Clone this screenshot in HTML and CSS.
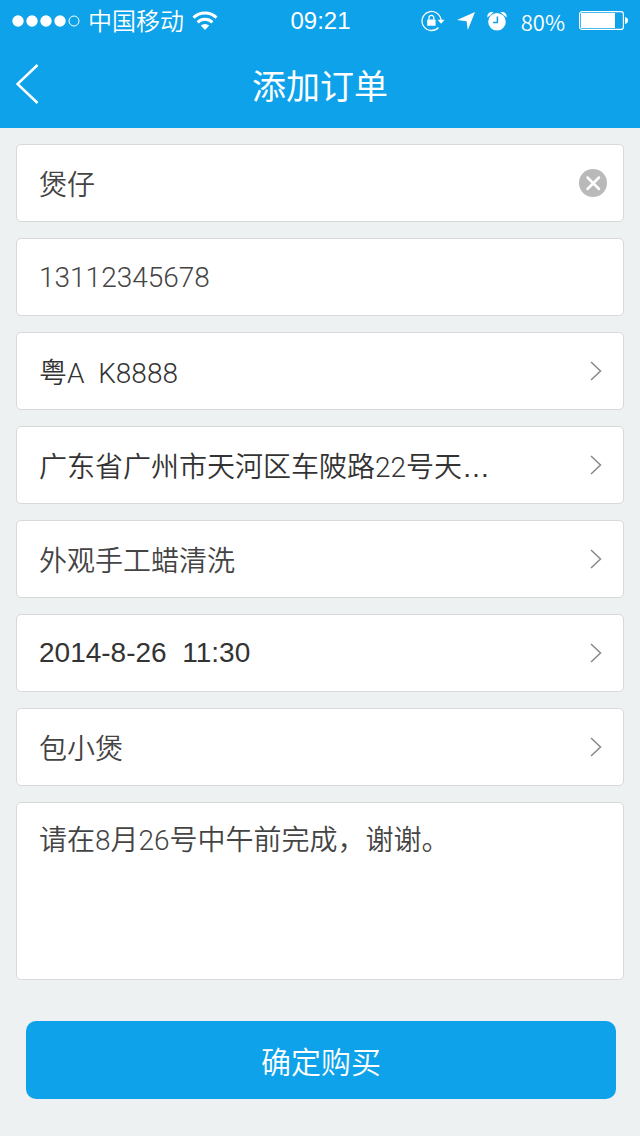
FILE: index.html
```html
<!DOCTYPE html>
<html lang="zh-CN">

<head>
    <meta charset="UTF-8">
    <meta name="viewport" content="width=device-width, initial-scale=1.0">
    <title>添加订单</title>

    <link rel="stylesheet" href="styles.css">
</head>

<body>

    <header>
        <div class="status">
            <div class="status-left">
                <svg class="signal" width="68" height="12" viewBox="0 0 68 12">
                    <g fill="#fff">
                        <circle cx="6" cy="6" r="5.7" />
                        <circle cx="20" cy="6" r="5.7" />
                        <circle cx="34" cy="6" r="5.7" />
                        <circle cx="48" cy="6" r="5.7" />
                    </g>
                    <circle cx="62" cy="6" r="5" fill="none" stroke="#fff" />
                </svg>
                <span class="carrier">中国移动</span>
                <svg width="26" height="20" viewBox="0 0 26 20" fill="none" stroke="#fff" stroke-width="3">
                    <path d="M1.500 6.700a16.500 16.500 0 0 1 23 0" />
                    <path d="M5.600 11.300a10.800 10.800 0 0 1 14.800 0" />
                    <path d="M13 18.900l-4.200-4.300a6 6 0 0 1 8.400 0z" fill="#fff" stroke="none" />
                </svg>
            </div>

            <time class="clock">09:21</time>

            <div class="status-right">
                <!-- rotation lock -->
                <svg width="24" height="22" viewBox="0 0 24 22">
                    <path d="M17.5 17.5a9.500 9.500 0 1 1 2.500-7.500" fill="none" stroke="#fff" stroke-width="1.3" />
                    <path d="M16.600 9.700h7l-3.500 4z" fill="#fff" />
                    <rect x="6.200" y="9.500" width="8.400" height="6.200" rx="0.500" fill="#fff" />
                    <path d="M8 9.700v-2a2.400 2.400 0 0 1 4.800 0v2" fill="none" stroke="#fff" stroke-width="1.3" />
                </svg>
                <!-- location -->
                <svg width="18" height="18" viewBox="0 0 18 18" fill="#fff">
                    <path d="M18 0L0 8l9.600 1.200L10.800 18z" />
                </svg>
                <!-- alarm -->
                <svg width="20" height="20" viewBox="0 0 20 20">
                    <path d="M0.500 6.500C-0.500 2.500 3 0 6.500 1.300zM19.500 6.500C20.500 2.500 17 0 13.500 1.300z" fill="#fff" />
                    <circle cx="10" cy="10.800" r="8.800" fill="#fff" />
                    <path d="M10.400 5.500v6H6" fill="none" stroke="#0da2e9" stroke-width="1.5" />
                </svg>
                <span class="percent">80%</span>
                <!-- battery -->
                <svg class="battery" width="50" height="20" viewBox="0 0 50 20">
                    <rect x="0.600" y="0.600" width="43.800" height="17.800" rx="2.500" fill="none" stroke="#fff" stroke-width="1.2" />
                    <rect x="2" y="2" width="34" height="15" fill="#fff" />
                    <path d="M46 6c4 0.500 4 6.500 0 7z" fill="#fff" />
                </svg>
            </div>
        </div>

        <nav class="navbar">
            <a class="back" href="#" aria-label="返回">
                <svg width="24" height="42" viewBox="0 0 24 42" fill="none" stroke="#fff" stroke-width="2.5">
                    <path d="M21.500 2L1.500 21l20 19" />
                </svg>
            </a>
            <h1>添加订单</h1>
        </nav>
    </header>

    <form class="order">
        <div class="field">
            <input type="text" name="name" aria-label="姓名" value="煲仔">
            <button class="clear" type="button" aria-label="清除">
                <svg width="28" height="28" viewBox="0 0 28 28">
                    <circle cx="14" cy="14" r="14" fill="#b9b9b9" />
                    <path d="M8.500 8.500l11.500 11.500M20 8.500L8.500 20" stroke="#fff" stroke-width="2.5" stroke-linecap="round" />
                </svg>
            </button>
        </div>

        <div class="field">
            <input type="tel" name="phone" aria-label="手机号" value="13112345678">
        </div>

        <button class="field picker dark" type="button">
            <span>粤A&nbsp; K8888</span>
            <svg class="arrow" width="12" height="20" viewBox="0 0 12 20"><path d="M1 1l9.500 9L1 19" /></svg>
        </button>

        <button class="field picker dark" type="button">
            <span>广东省广州市天河区车陂路22号天<span class="dots">…</span></span>
            <svg class="arrow" width="12" height="20" viewBox="0 0 12 20"><path d="M1 1l9.500 9L1 19" /></svg>
        </button>

        <button class="field picker" type="button">
            <span>外观手工蜡清洗</span>
            <svg class="arrow" width="12" height="20" viewBox="0 0 12 20"><path d="M1 1l9.500 9L1 19" /></svg>
        </button>

        <button class="field picker date" type="button">
            <span>2014-8-26&nbsp; 11:30</span>
            <svg class="arrow" width="12" height="20" viewBox="0 0 12 20"><path d="M1 1l9.500 9L1 19" /></svg>
        </button>

        <button class="field picker" type="button">
            <span>包小煲</span>
            <svg class="arrow" width="12" height="20" viewBox="0 0 12 20"><path d="M1 1l9.500 9L1 19" /></svg>
        </button>

        <textarea class="note" name="note" aria-label="备注">请在8月26号中午前完成，谢谢。</textarea>

        <button class="submit" type="submit">确定购买</button>
    </form>

</body>

</html>
```
FILE: styles.css
```css
* {
    box-sizing: border-box;
}

body {
    margin: 0;
    background-color: #edf1f2;
    color: #444;
    font-family: Roboto, "Noto Sans CJK SC", sans-serif;
    font-size: 28px;
    font-weight: 350;
}

input,
textarea,
button {
    margin: 0;
    padding: 0;
    border: none;
    background: none;
    color: inherit;
    font: inherit;
}

svg {
    display: block;
    flex: none;
}

header {
    background-color: #0da2e9;
    color: #fff;
}

.status {
    display: grid;
    grid-template-columns: 1fr auto 1fr;
    align-items: center;
    height: 40px;
    padding: 0 11px 0 12px;
}

.status-left,
.status-right {
    display: flex;
    align-items: center;
}

.status-left {
    gap: 8px;
}

.status-right {
    justify-content: flex-end;
    gap: 12px;
}

.carrier {
    padding-top: 2px;
    font-size: 24px;
    line-height: 40px;
}

.clock {
    font-family: "Liberation Sans", sans-serif;
    font-size: 24px;
    line-height: 40px;
}

.percent {
    margin: 0 2px;
    font-family: "Noto Sans CJK SC", sans-serif;
    font-size: 22px;
    line-height: 40px;
}

.navbar {
    display: grid;
    grid-template-columns: 48px 1fr 48px;
    align-items: center;
    height: 88px;
    padding: 0 16px;
}

h1 {
    margin: 0;
    font-size: 34px;
    font-weight: 400;
    text-align: center;
}

.order {
    display: flex;
    flex-direction: column;
    gap: 16px;
    padding: 16px;
}

.field,
.note {
    border: 1px solid #d9d9d9;
    border-radius: 5px;
    background-color: #fff;
}

.field {
    display: flex;
    align-items: center;
    height: 78px;
    padding: 0 16px 0 22px;
}

.field input {
    flex: 1;
    min-width: 0;
    outline: none;
}

.picker {
    justify-content: space-between;
    padding-right: 21px;
    text-align: left;
}

.dark {
    color: #333;
}

.date {
    color: #333;
    font-family: "Liberation Sans", sans-serif;
}

.dots {
    font-family: "Liberation Sans", sans-serif;
}

.arrow {
    fill: none;
    stroke: #888;
    stroke-width: 1.5;
}

.note {
    height: 178px;
    padding: 18px 22px;
    line-height: 40px;
    resize: none;
    outline: none;
}

.submit {
    height: 78px;
    margin: 25px 8px 0 10px;
    border-radius: 10px;
    background-color: #0da2e9;
    color: #fff;
    font-size: 30px;
}
```
